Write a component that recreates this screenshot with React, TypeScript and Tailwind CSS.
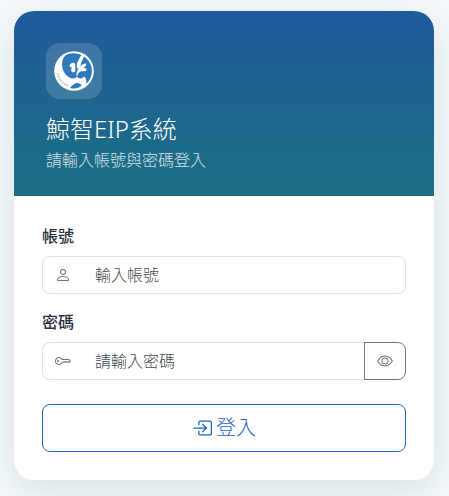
import { useState } from "react";
import type { ReactNode } from "react";
import { BsBoxArrowInRight, BsEye, BsEyeSlash, BsKey, BsPerson } from "react-icons/bs";

function WhaleLogo() {
  return (
    <svg viewBox="0 0 40 40" className="h-10 w-10" aria-hidden="true">
      <circle cx="20" cy="20" r="19.8" fill="#fff" />
      {/* sea */}
      <path
        d="M13 3.500C16 2.200 19 1.800 22 2.500c8 1 14.500 7 15.800 15 .8 6.500-1.800 12-5.800 15.500.8-3.500 0-6-2-7.500-3 3-5.500 2-7 0-2 2.500-6 2.500-9 0C9 22 7 15 8.500 9.500 9.300 6.500 11 4.500 13 3.500Z"
        fill="#2f79bd"
      />
      <path
        d="M18 34.500c2-.5 2.500-2.500 5-2.500 2 0 3 1.500 5 2-2 2.500-5 3.500-9 3.500-1 0-2-.5-3-1 .5-1 1.500-.5 2-2Z"
        fill="#2f79bd"
      />
      {/* spray */}
      <path
        d="M17 12.500c2.500-1.500 4.800-.5 4.300 2.500-.5 2 .5 3.500 0 5-.8 2.200-3.800 1.600-4 0-.3-1.800.3-2.500.2-4-2.200.5-2.800-2-.5-3.500Z"
        fill="#fff"
      />
      <path
        d="M28.500 2.800c2.500.2 2 3 .5 5.200-1.800 3-2.200 5-2.500 8-.3 2-3.500 2.500-3.700 0C22.500 12 25 7 28.500 2.800Z"
        fill="#fff"
      />
      <path
        d="M26.500 15.500c1.500-2 4-3.500 5.500-2.800 1 1.300-1 3.300-3 4.300 2.500 0 4 .5 3.500 2-.8 1.600-3 1.300-5 1.200-2 .5-3 2-3.500 4.300l-1.500.5c-.5-3 1-7 4-9.500Z"
        fill="#fff"
      />
      <circle cx="26.700" cy="24.300" r="3" fill="#2f79bd" />
      <path
        d="M3.500 22.500c1.500 6 5.500 10.500 11 12.500"
        fill="none"
        stroke="#a9c5e0"
        strokeWidth="2"
        strokeDasharray="1.500 1"
      />
    </svg>
  );
}

type FieldProps = {
  id: string;
  label: string;
  type: string;
  placeholder: string;
  icon: ReactNode;
  action?: ReactNode;
};

function Field({ id, label, type, placeholder, icon, action }: FieldProps) {
  return (
    <div>
      <label htmlFor={id} className="mb-2 block font-medium text-[#2b3040]">
        {label}
      </label>
      <div className="flex h-[38px]">
        <div
          className={
            action
              ? "flex min-w-0 flex-1 items-center rounded-l-lg border border-r-0 border-[#dee2e6]"
              : "flex min-w-0 flex-1 items-center rounded-lg border border-[#dee2e6]"
          }
        >
          <span className="shrink-0 px-3 text-[#6c757d]">{icon}</span>
          <input
            id={id}
            name={id}
            type={type}
            placeholder={placeholder}
            className="h-full min-w-0 flex-1 bg-transparent px-3 font-light text-[#212529] outline-none placeholder:text-[#42494f]"
          />
        </div>
        {action}
      </div>
    </div>
  );
}

export default function App() {
  const [showPassword, setShowPassword] = useState(false);

  return (
    <div className="min-h-screen bg-[#f3f9fb] pt-[11px] pr-[15px] pb-4 pl-3.5 font-['Noto_Sans','Noto_Sans_CJK_TC',sans-serif] text-base">
      <main className="mx-auto max-w-[420px] overflow-hidden rounded-[20px] bg-white shadow-[0_12px_40px_rgba(15,40,50,0.10)]">
        <header className="bg-linear-to-b from-[#205a9c] to-[#1c6f82] px-8 pt-8 pb-6 text-white">
          <div className="flex h-14 w-14 items-center justify-center rounded-[14px] bg-white/15">
            <WhaleLogo />
          </div>
          <h1 className="mt-4 text-2xl leading-7 font-light">鯨智EIP系統</h1>
          <p className="mt-[5px] leading-6 font-light text-white/80">請輸入帳號與密碼登入</p>
        </header>

        <form className="p-7" onSubmit={(e) => e.preventDefault()}>
          <div className="space-y-4">
            <Field
              id="account"
              label="帳號"
              type="text"
              placeholder="輸入帳號"
              icon={<BsPerson size={16} />}
            />
            <Field
              id="password"
              label="密碼"
              type={showPassword ? "text" : "password"}
              placeholder="請輸入密碼"
              icon={<BsKey size={16} />}
              action={
                <button
                  type="button"
                  aria-label="顯示密碼"
                  onClick={() => setShowPassword(!showPassword)}
                  className="shrink-0 rounded-r-lg border border-[#6c757d] px-3 text-[#6c757d]"
                >
                  {showPassword ? <BsEyeSlash size={16} /> : <BsEye size={16} />}
                </button>
              }
            />
          </div>
          <button
            type="submit"
            className="mt-6 flex h-12 w-full items-center justify-center gap-1 rounded-lg border border-[#2468b8] text-xl font-light text-[#1d64c2]"
          >
            <BsBoxArrowInRight size={20} />
            登入
          </button>
        </form>
      </main>
    </div>
  );
}
